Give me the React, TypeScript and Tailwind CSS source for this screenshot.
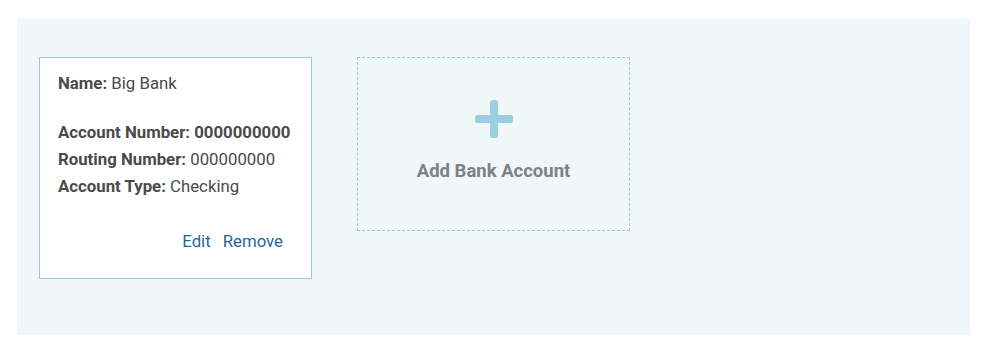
export default function App() {
  return (
    <div className="min-h-screen bg-white pl-[17px] pt-[18px]" style={{ fontFamily: 'Roboto, "Liberation Sans", sans-serif' }}>
      <div className="w-[953px] h-[317px] bg-[#f0f7f9] pl-[22px] pt-[39px] flex items-start gap-[45px]">
        <div className="w-[273px] h-[222px] bg-white border border-[#95cbdb] pl-[18px] pr-[10px] pt-[12px] text-[16.8px] leading-[27px] text-[#4a4a4a] whitespace-nowrap flex flex-col">
          <div>
            <span className="font-bold">Name:</span> Big Bank
          </div>
          <div className="mt-[22px]">
            <span className="font-bold">Account Number:</span> <span className="font-bold">0000000000</span>
          </div>
          <div>
            <span className="font-bold">Routing Number:</span> 000000000
          </div>
          <div>
            <span className="font-bold">Account Type:</span> Checking
          </div>
          <div className="mt-[28px] flex justify-end gap-[12px] pr-[18px] text-[#23679a]">
            <a className="cursor-pointer">Edit</a>
            <a className="cursor-pointer">Remove</a>
          </div>
        </div>

        <div className="w-[273px] h-[174px] border border-dashed border-[#95cbdb] flex flex-col items-center pt-[42px]">
          <svg width="38" height="38" viewBox="0 0 38 38" fill="#9bcee1">
            <rect x="0" y="15" width="38" height="8" rx="2.5" />
            <rect x="15" y="0" width="8" height="38" rx="2.5" />
          </svg>
          <div className="mt-[21px] text-[18.5px] leading-[24px] font-bold text-[#7d8188]">Add Bank Account</div>
        </div>
      </div>
    </div>
  );
}
